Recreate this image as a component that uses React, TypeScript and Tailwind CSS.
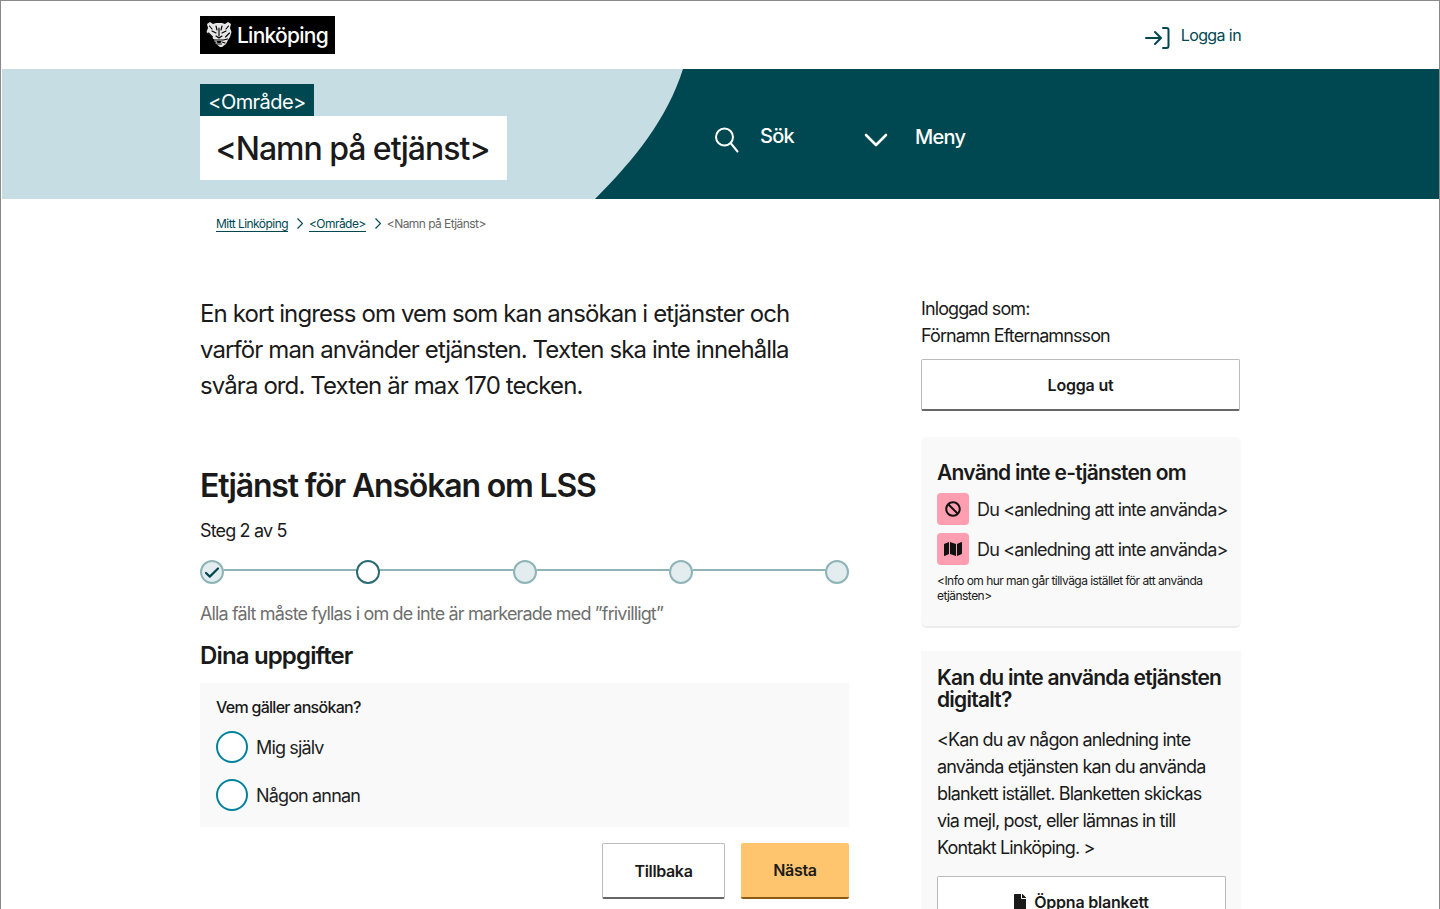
import { FaBan, FaFile, FaMap } from "react-icons/fa";

function Lion() {
  return (
    <svg width="26" height="27" viewBox="0 0 26 27" fill="none" strokeLinecap="round" strokeLinejoin="round">
      <path d="M1 3l3-2 3 2 3-1h6l3 1 3-2 3 2-1 4 1.500 4-1.500 5-2 3-2 4-4 3h-2l-4-3-2-4-2-3L.5 11 2 7z" fill="#e6e6e6" />
      <path d="M3.500 5l2.500 3M22.500 5L20 8M6 10l4 2M20 10l-4 2M2.500 12l4 4M23.500 12l-4 4M4.500 18l4 1M21.500 18l-4 1M7 22l3-1M19 22l-3-1M10 5l1 4M16 5l-1 4M13 7v8M10 15l3 2 3-2M9 19h8M10.500 23h5" stroke="#000" strokeWidth="1.150" />
      <path d="M10.500 20h5l-1 2h-3z" fill="#000" />
    </svg>
  );
}

function Radio({ label }: { label: string }) {
  return (
    <div className="flex items-center gap-2">
      <span className="h-8 w-8 rounded-full border-2 border-[#00829b] bg-white" />
      <span className="pt-[1px] text-[18px] leading-[31px] tracking-[-0.85px] text-[#222]">{label}</span>
    </div>
  );
}

function Step({ state }: { state: "done" | "current" | "todo" }) {
  const cls =
    state === "current"
      ? "border-[#2a6a72] bg-white"
      : "border-[#8fb4b8] bg-[#e3ecee]";
  return (
    <span className={`flex h-6 w-6 shrink-0 items-center justify-center rounded-full border-2 ${cls}`}>
      {state === "done" && (
        <svg width="16" height="13" viewBox="0 0 16 13" fill="none" stroke="#004851" strokeWidth="2.200" strokeLinecap="round" strokeLinejoin="round">
          <path d="M2 7l3.800 3.600L14 2.500" />
        </svg>
      )}
    </span>
  );
}

function Line() {
  return <span className="mt-[9px] h-[2px] flex-1 self-start bg-[#8fb4b8]" />;
}

function Reason({ icon }: { icon: React.ReactNode }) {
  return (
    <div className="flex items-center gap-2">
      <span className="flex h-8 w-8 shrink-0 items-center justify-center rounded-[4px] bg-[#ff9eb0] text-[#111]">{icon}</span>
      <span className="whitespace-nowrap pt-[2px] text-[18px] leading-[30px] tracking-[-0.82px] text-[#222]">Du &lt;anledning att inte använda&gt;</span>
    </div>
  );
}

function Crumb() {
  return (
    <svg className="ml-[9px] mr-[6px]" width="6" height="11" viewBox="0 0 6 11" fill="none" stroke="#004851" strokeWidth="1.2">
      <path d="M.5 .5l5 5-5 5" />
    </svg>
  );
}

export default function App() {
  return (
    <div className="h-[909px] overflow-hidden border-x border-t border-[#8a8a8a] bg-white font-['Inter',sans-serif] text-[#1a1a1a]">
      <header className="flex h-[68px] items-center justify-between pl-[199px] pr-[198px]">
        <div className="mt-[-1px] flex h-[38px] w-[135px] items-center gap-[5px] bg-black pl-[6px]">
          <Lion />
          <span className="pt-[2px] text-[21px] font-medium tracking-[-0.75px] text-white">Linköping</span>
        </div>
        <div className="flex items-center gap-[11px] text-[#004851]">
          <svg className="mt-[6px]" width="25" height="22" viewBox="0 0 25 22" fill="none" stroke="#004851" strokeWidth="2" strokeLinecap="round" strokeLinejoin="round">
            <path d="M1 11h14M10 5l6 6-6 6" />
            <path d="M18 1h3.500a2 2 0 0 1 2 2v16a2 2 0 0 1-2 2H18" />
          </svg>
          <span className="text-[16px] tracking-[-0.6px]">Logga in</span>
        </div>
      </header>

      <section className="relative ml-[1px] flex h-[130px] bg-[#c5dde3] pl-[198px]">
        <svg className="absolute right-0 top-0 h-[130px] w-[844px]" viewBox="0 0 844 130" preserveAspectRatio="none">
          <path d="M88 0 C 72 50 40 90 0 130 L844 130 L844 0 Z" fill="#004851" />
        </svg>
        <div className="relative w-[514px] pt-[15px]">
          <div className="flex h-[32px] w-[114px] items-center justify-center bg-[#004851] pt-[4px] text-[20px] tracking-[-0.55px] text-white">&lt;Område&gt;</div>
          <div className="flex h-[64px] w-[307px] items-center justify-center bg-white pr-[2px] pt-[2px] text-[32px] font-medium tracking-[-1.03px] text-[#1a1a1a]">&lt;Namn på etjänst&gt;</div>
        </div>
        <nav className="relative flex items-center pt-[12px] text-[20px] font-medium tracking-[-0.75px] text-white">
          <svg className="mt-[-1px]" width="26" height="27" viewBox="0 0 26 27" fill="none" stroke="#fff" strokeWidth="2" strokeLinecap="round">
            <circle cx="10.500" cy="11" r="8.500" />
            <path d="M17 17.500l6.500 8" />
          </svg>
          <span className="ml-[20px] mt-[-8px] w-[104px]">Sök</span>
          <svg width="24" height="14" viewBox="0 0 24 14" fill="none" stroke="#fff" strokeWidth="2.600" strokeLinecap="round" strokeLinejoin="round">
            <path d="M2 2l10 10L22 2" />
          </svg>
          <span className="ml-[27px] mt-[-6px]">Meny</span>
        </nav>
      </section>

      <div className="flex h-[49px] items-center pl-[215px] text-[12px] tracking-[-0.55px]">
        <span className="mt-[1px] border-b border-[#004851] leading-[14px] text-[#004851]">Mitt Linköping</span>
        <Crumb />
        <span className="mt-[1px] border-b border-[#004851] leading-[14px] text-[#004851]">&lt;Område&gt;</span>
        <Crumb />
        <span className="text-[#666]">&lt;Namn på Etjänst&gt;</span>
      </div>

      <div className="flex pl-[199px]">
        <main className="w-[649px] shrink-0 pt-[48px]">
          <p className="text-[24px] leading-[36px] tracking-[-0.9px]">
            En kort ingress om vem som kan ansökan i etjänster och<br />
            varför man använder etjänsten. Texten ska inte innehålla<br />
            svåra ord. Texten är max 170 tecken.
          </p>
          <h1 className="mt-[62px] text-[32px] font-semibold leading-[40px] tracking-[-1.18px]">Etjänst för Ansökan om LSS</h1>
          <p className="mt-[14px] text-[18px] leading-[22px] tracking-[-0.85px]">Steg 2 av 5</p>
          <div className="mt-[18px] flex items-start">
            <Step state="done" />
            <Line />
            <Step state="current" />
            <Line />
            <Step state="todo" />
            <Line />
            <Step state="todo" />
            <Line />
            <Step state="todo" />
          </div>
          <p className="mt-[19px] text-[18px] leading-[22px] tracking-[-0.85px] text-[#6f6f6f]">Alla fält måste fyllas i om de inte är markerade med ”frivilligt”</p>
          <h2 className="mt-[16px] text-[24px] font-semibold leading-[30px] tracking-[-0.85px]">Dina uppgifter</h2>
          <div className="mt-[12px] flex h-[144px] flex-col gap-[16px] bg-[#f9f9f9] px-4 pt-[13px]">
            <p className="mb-[-3px] text-[16px] font-medium leading-[22px] tracking-[-0.72px]">Vem gäller ansökan?</p>
            <Radio label="Mig själv" />
            <Radio label="Någon annan" />
          </div>
          <div className="mt-[16px] flex justify-end gap-4">
            <button className="h-[56px] w-[123px] rounded-[2px] border border-[#bbb] border-b-2 border-b-[#666] bg-white text-[16px] font-semibold tracking-[-0.35px]">Tillbaka</button>
            <button className="h-[56px] w-[108px] rounded-[2px] border-b-2 border-b-[#8a5a12] bg-[#ffc46e] text-[16px] font-semibold tracking-[-0.3px]">Nästa</button>
          </div>
        </main>

        <aside className="ml-[72px] w-[320px] shrink-0 pt-[47px]">
          <p className="text-[18px] leading-[27px] tracking-[-0.9px]">Inloggad som:<br />Förnamn Efternamnsson</p>
          <button className="mt-[10px] h-[52px] w-[319px] rounded-[2px] border border-[#bbb] border-b-2 border-b-[#666] bg-white text-[16px] font-semibold tracking-[-0.2px]">Logga ut</button>
          <div className="mt-[26px] h-[191px] rounded-[6px] border-b-2 border-b-[#ececec] bg-[#f9f9f9] px-4 pt-[22px]">
            <h3 className="text-[21px] font-semibold leading-[27px] tracking-[-0.75px]">Använd inte e-tjänsten om</h3>
            <div className="mt-[7px] flex flex-col gap-2">
              <Reason icon={<FaBan size={16} />} />
              <Reason icon={<FaMap size={18} />} />
            </div>
            <p className="mt-[8px] text-[12px] leading-[15px] tracking-[-0.54px]">&lt;Info om hur man går tillväga istället för att använda etjänsten&gt;</p>
          </div>
          <div className="mt-[23px] h-[300px] bg-[#f9f9f9] px-4 pt-[16px]">
            <h3 className="text-[21px] font-semibold leading-[22px] tracking-[-0.75px]">Kan du inte använda etjänsten digitalt?</h3>
            <p className="mt-[15px] text-[18px] leading-[27px] tracking-[-0.84px]">
              &lt;Kan du av någon anledning inte<br />
              använda etjänsten kan du använda<br />
              blankett istället. Blanketten skickas<br />
              via mejl, post, eller lämnas in till<br />
              Kontakt Linköping. &gt;
            </p>
            <button className="mt-[15px] flex h-[52px] w-[289px] items-center justify-center gap-[8px] rounded-[2px] border border-[#bbb] border-b-2 border-b-[#666] bg-white text-[16px] font-semibold tracking-[-0.2px]">
              <FaFile className="h-4 w-3" />
              Öppna blankett
            </button>
          </div>
        </aside>
      </div>
    </div>
  );
}
